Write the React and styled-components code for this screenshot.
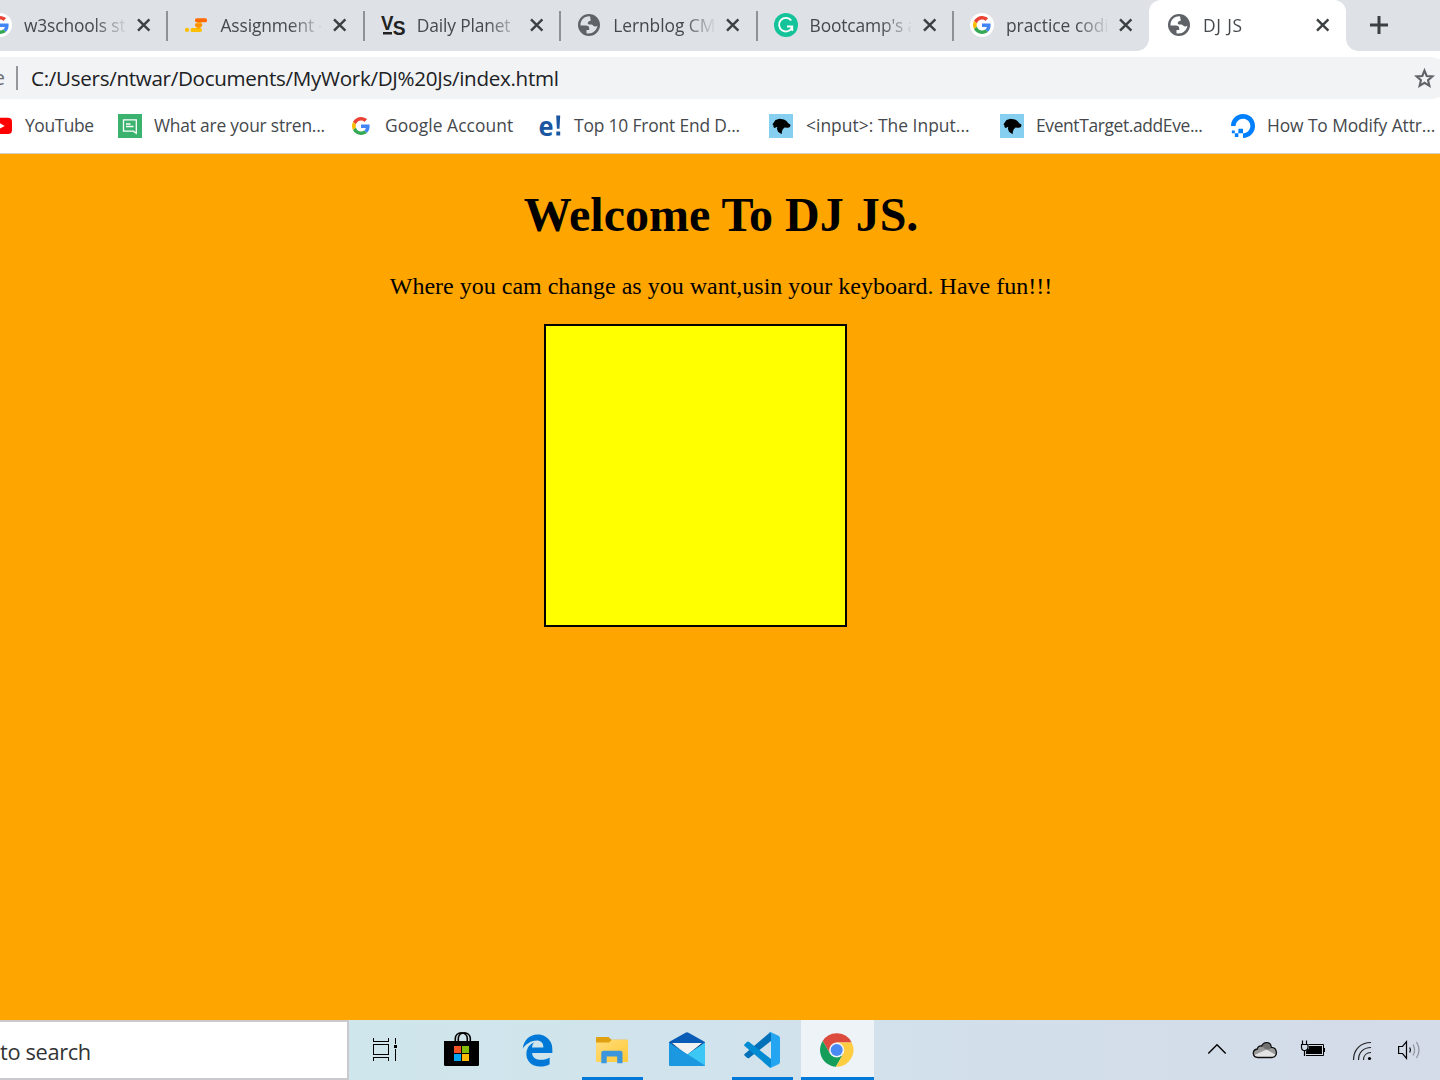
import React from 'react'
import styled, { createGlobalStyle } from 'styled-components'
import { SiDigitalocean } from 'react-icons/si'
import { FaEdgeLegacy } from 'react-icons/fa6'

const GlobalStyle = createGlobalStyle`
  * {
    box-sizing: border-box;
  }
  body {
    margin: 0;
    overflow: hidden;
    font-family: 'Open Sans', 'Noto Sans', sans-serif;
  }
  svg {
    display: block;
    flex: none;
  }
`
const Screen = styled.div`
  display: flex;
  flex-direction: column;
  width: 1440px;
  height: 1080px;
  overflow: hidden;
  background-color: #fff;
`
const TabStrip = styled.div`
  display: flex;
  flex: none;
  height: 51px;
  padding-right: 40px;
  margin-left: -29px;
  background-color: #dee1e6;
`
const Tab = styled.div`
  position: relative;
  display: flex;
  flex: none;
  align-items: center;
  width: 196.4px;
  height: 51px;
  padding: 0 0 2px ${(props) => (props.$active ? 17.6 : 17)}px;
  background-color: ${(props) => (props.$active ? '#fff' : 'transparent')};
  border-radius: 12px 12px 0 0;

  &::before,
  &::after {
    content: '';
    display: ${(props) => (props.$active ? 'block' : 'none')};
    position: absolute;
    bottom: 0;
    width: 12px;
    height: 12px;
  }
  &::before {
    left: -12px;
    background: radial-gradient(circle at 0 0, transparent 11.5px, #fff 12px);
  }
  &::after {
    right: -12px;
    background: radial-gradient(circle at 100% 0, transparent 11.5px, #fff 12px);
  }
`
const TabTitle = styled.div`
  width: 101px;
  margin: 0 12px;
  overflow: hidden;
  font-size: 17.4px;
  line-height: 24px;
  letter-spacing: ${(props) => props.$spacing || 0}px;
  white-space: nowrap;
  color: #45494d;
  mask-image: linear-gradient(to right, #000 70px, transparent 104px);
`
const TabDivider = styled.div`
  width: 2px;
  height: 30px;
  margin: 2px -1px 0 auto;
  background-color: #8f9398;
`
const NewTab = styled.div`
  display: flex;
  align-items: center;
  padding: 0 0 2px 21.5px;
`
const AddressRow = styled.div`
  display: flex;
  flex: none;
  height: 48px;
  padding-top: 6px;
`
const AddressBar = styled.div`
  display: flex;
  flex: none;
  align-items: center;
  width: 1451px;
  height: 42px;
  padding-right: 14px;
  background-color: #f1f3f4;
  border-radius: 0 21px 21px 0;
`
const Scheme = styled.div`
  display: flex;
  justify-content: flex-end;
  width: 18px;
  height: 24px;
  padding-right: 11px;
  font-size: 20px;
  line-height: 24px;
  color: #6b6f73;
  border-right: 2px solid #95989b;
`
const Url = styled.div`
  flex: 1;
  margin-left: 13px;
  font-size: 20.6px;
  line-height: 28px;
  letter-spacing: -0.3px;
  color: #202124;
`
const Bookmarks = styled.div`
  display: flex;
  flex: none;
  align-items: center;
  gap: 24px;
  height: 55px;
  margin-left: -11px;
  border-bottom: 1px solid #d5d0c4;
`
const Bookmark = styled.div`
  display: flex;
  flex: none;
  align-items: center;
  gap: 12px;
`
const BookmarkLabel = styled.div`
  width: ${(props) => props.$width}px;
  padding: 0 0 2px ${(props) => props.$indent || 0}px;
  font-size: 17.4px;
  line-height: 24px;
  letter-spacing: ${(props) => props.$spacing || 0}px;
  white-space: nowrap;
  color: #45494d;
`
const Page = styled.main`
  flex: 1;
  padding-top: 33px;
  font-family: 'Liberation Serif', serif;
  text-align: center;
  color: #000;
  background-color: orange;
`
const Title = styled.h1`
  margin: 0 0 31px 2px;
  font-size: 48px;
  line-height: 55px;
`
const Intro = styled.p`
  margin: 0 0 24px 2px;
  font-size: 24px;
  line-height: 27px;
`
const Pad = styled.div`
  width: 303px;
  height: 303px;
  margin-left: 544px;
  background-color: yellow;
  border: 2px solid #000;
`
const Taskbar = styled.footer`
  display: flex;
  flex: none;
  height: 60px;
  background: linear-gradient(to right, #cfe6ec 350px, #d1e3ec 700px, #d3dce9 1250px, #d4dbe9);
`
const SearchBox = styled.div`
  display: flex;
  align-items: center;
  width: 349px;
  padding-top: 2px;
  font-size: 21.8px;
  letter-spacing: -0.35px;
  color: #333;
  background-color: #fff;
  border: 2px solid #cbc9cd;
  border-left: none;
`
const Apps = styled.div`
  display: flex;
  gap: 2px;
`
const AppButton = styled.div`
  display: flex;
  flex-direction: column;
  align-items: center;
  justify-content: center;
  position: relative;
  width: ${(props) => props.$width || 73}px;
  padding-right: ${(props) => (props.$width ? 4 : 0)}px;
  background-color: ${(props) => (props.$active ? '#edf3f7' : 'transparent')};

  &::after {
    content: '';
    display: ${(props) => (props.$open || props.$active ? 'block' : 'none')};
    position: absolute;
    right: ${(props) => (props.$active ? 0 : 6)}px;
    bottom: 0;
    left: ${(props) => (props.$active ? 0 : 6)}px;
    height: 3px;
    background-color: #0078d7;
  }
`
const Tray = styled.div`
  display: flex;
  align-items: center;
  gap: 18px;
  margin-left: auto;
  padding-right: 16px;
`
const EdgeMark = styled(FaEdgeLegacy)`
  width: 33px;
  height: 33px;
  color: #0078d7;
`

function GoogleIcon({ disc }) {
  return (
    <svg width='24' height='24' viewBox='0 0 24 24'>
      {disc && <circle cx='12' cy='12' r='12' fill='#fff' />}
      <g transform='translate(3 3) scale(.375)'>
        <path fill='#EA4335' d='M24 9.5c3.54 0 6.71 1.22 9.21 3.6l6.85-6.85C35.9 2.38 30.47 0 24 0 14.62 0 6.51 5.38 2.56 13.22l7.98 6.19C12.43 13.72 17.74 9.5 24 9.5z' />
        <path fill='#4285F4' d='M46.98 24.55c0-1.57-.15-3.09-.38-4.55H24v9.02h12.94c-.58 2.96-2.26 5.48-4.78 7.18l7.73 6c4.51-4.18 7.09-10.36 7.09-17.65z' />
        <path fill='#FBBC05' d='M10.53 28.59c-.48-1.45-.76-2.99-.76-4.59s.27-3.14.76-4.59l-7.98-6.19C.92 16.46 0 20.12 0 24c0 3.88.92 7.54 2.56 10.78l7.97-6.19z' />
        <path fill='#34A853' d='M24 48c6.48 0 11.93-2.13 15.89-5.81l-7.73-6c-2.15 1.45-4.92 2.3-8.16 2.3-6.26 0-11.57-4.22-13.47-9.91l-7.98 6.19C6.51 42.62 14.62 48 24 48z' />
      </g>
    </svg>
  )
}

function AssignmentIcon() {
  return (
    <svg width='24' height='24' viewBox='0 0 24 24'>
      <rect x='11' y='5.3' width='12' height='4' rx='1.6' fill='#ff6a00' />
      <rect x='11' y='10.2' width='7.2' height='3.8' rx='1.4' fill='#ff9100' />
      <rect x='6.5' y='14.9' width='11.4' height='4' rx='1.6' fill='#ffbf00' />
      <path d='M13 9h4.500l-1 1.500h-3zM12.500 13.500h4v2h-4z' fill='#ffa000' />
      <circle cx='3' cy='16.9' r='2.1' fill='#ffbf00' />
    </svg>
  )
}

function VsIcon() {
  return (
    <svg width='24' height='24' viewBox='0 0 24 24' overflow='visible' fontFamily='Liberation Sans' fontWeight='700' fill='#222'>
      <text x='0' y='16.5' fontSize='20.5' textLength='12.5' lengthAdjust='spacingAndGlyphs'>V</text>
      <text x='11.8' y='21.5' fontSize='20' textLength='12.8' lengthAdjust='spacingAndGlyphs'>S</text>
      <rect x='2' y='19' width='9' height='2.5' />
    </svg>
  )
}

function GlobeIcon({ land }) {
  return (
    <svg width='24' height='24' viewBox='0 0 24 24'>
      <circle cx='12' cy='12' r='11' fill='#5f6368' />
      <path
        d='M13 3.400C7.200 3 3.300 7.400 3.500 12.500h5.300c2.200 0 3.400 1 3.400 2.700v1.700H9.500v3.300c5.200 1.300 10-2 10.900-7.400-1.600.9-3.300.9-4.300-.3-.9-1.100-2.100-.9-3.600-.9-1.900 0-2.200-1.900-1.200-2.900.9-.8 2.300-.4 2.500-1.700.1-.9-.9-1.400-.5-2.300.3-.6-.2-.9-.3-1.300z'
        fill={land}
      />
    </svg>
  )
}

function GrammarlyIcon() {
  return (
    <svg width='24' height='24' viewBox='0 0 24 24' fill='none' stroke='#fff' strokeWidth='1.8'>
      <circle cx='12' cy='12' r='12' fill='#15c39a' stroke='none' />
      <path d='M17.300 7.500A6.800 6.800 0 1 0 18 14.700M13 13.500h5.300v4.600' />
    </svg>
  )
}

function CloseIcon() {
  return (
    <svg width='14' height='14' viewBox='0 0 14 14' stroke='#3c4043' strokeWidth='2.4'>
      <path d='M1 1.300l11.400 11.400M12.400 1.300L1 12.700' />
    </svg>
  )
}

function StarIcon() {
  return (
    <svg width='25' height='25' viewBox='0 0 24 24' fill='none' stroke='#5f6368' strokeWidth='2'>
      <path d='M12 4.400l2.100 5.200 5.500.4-4.200 3.600 1.300 5.400-4.700-2.900-4.700 2.900 1.300-5.400L4.400 10l5.500-.4z' />
    </svg>
  )
}

function YoutubeIcon() {
  return (
    <svg width='24' height='24' viewBox='0 0 24 24'>
      <rect x='0' y='3.7' width='23' height='16.3' rx='4' fill='#f00' />
      <path d='M9.500 8.400l6.200 3.500-6.200 3.500z' fill='#fff' />
    </svg>
  )
}

function NoteIcon() {
  return (
    <svg width='24' height='24' viewBox='0 0 24 24' fill='none' stroke='#fff' strokeWidth='1.3'>
      <rect width='24' height='24' fill='#3bb36e' stroke='none' />
      <path d='M5.500 5.800h12.800v13.400l-3-2H5.500zM8 10h4.500M8 12.500h7.500' />
    </svg>
  )
}

function ExclaimIcon() {
  return (
    <svg width='24' height='24' viewBox='0 0 24 24' fontFamily='Open Sans' fontWeight='700' fill='#1b56a0'>
      <text x='0.5' y='21.8' fontSize='27' textLength='15' lengthAdjust='spacingAndGlyphs'>e</text>
      <path d='M18.200 1.500h4l-.7 13.300h-2.600z' />
      <rect x='18.3' y='17.5' width='3.9' height='4' />
    </svg>
  )
}

function DogIcon() {
  return (
    <svg width='24' height='24' viewBox='0 0 24 24'>
      <rect width='24' height='24' fill='#87cff0' />
      <path d='M3.500 10.500l1.400-2.200L6.500 6l4-1.200 4.500.7 2.500 1.500 1.500 2 2.500 1.700-.5 2.300-2 .8-3.500-.2-1.700 1.600-1 2.500.2 2-1.500-.2-2.500-1.800-1-2.700.2-2.200-2 1-1.500.200.6-1.500-1.500.2.800-1.200z' />
    </svg>
  )
}

function PlusIcon() {
  return (
    <svg width='24' height='24' viewBox='0 0 24 24' stroke='#3c4043' strokeWidth='3'>
      <path d='M12 3v18M3 12h18' />
    </svg>
  )
}

function TaskViewIcon() {
  return (
    <svg width='26' height='26' viewBox='0 0 26 26' fill='none' stroke='#000' shapeRendering='crispEdges'>
      <path d='M1.500 1v3.500h15V1M1.500 7.500h15v10h-15zM1.500 24v-3.500h15V24M23.500 1v6M23.500 12v12' />
      <rect x='22' y='8' width='3' height='3' fill='#000' stroke='none' />
    </svg>
  )
}

function StoreIcon() {
  return (
    <svg width='39' height='40' viewBox='0 0 39 40'>
      <path d='M12.300 12V8.500c0-7.500 12-7.500 12 0V12M15.300 12V8.500c0-7.500 12-7.500 12 0V12' fill='none' stroke='#000' strokeWidth='1.6' />
      <path d='M1 11h35v23.500q0 1.500-1.500 1.500h-32Q1 36 1 34.500z' />
      <rect x='11' y='16' width='7' height='7' fill='#f35325' />
      <rect x='19' y='16' width='7' height='7' fill='#81bc06' />
      <rect x='11' y='24' width='7' height='7' fill='#05a6f0' />
      <rect x='19' y='24' width='7' height='7' fill='#ffba08' />
    </svg>
  )
}

function FolderIcon() {
  return (
    <svg width='39' height='40' viewBox='0 0 39 40'>
      <defs>
        <linearGradient id='folder' x1='0' y1='0' x2='1' y2='1'>
          <stop offset='0' stopColor='#ffdc7c' />
          <stop offset='1' stopColor='#ffc937' />
        </linearGradient>
      </defs>
      <path d='M3 8q0-1 1-1h11.500l3 2.800H34q1 0 1 1V20H3z' fill='#e0a010' />
      <path d='M3 12.500h13l3-2.800h15q1 0 1 1V31q0 1-1 1H4q-1 0-1-1z' fill='url(#folder)' />
      <path d='M8.300 33.200V23q0-2.200 2.200-2.200h16.800q2.200 0 2.200 2.200v10.200h-5.300v-6.700H13.700v6.700z' fill='#3b96dc' />
    </svg>
  )
}

function MailIcon() {
  return (
    <svg width='39' height='40' viewBox='0 0 39 40'>
      <path d='M1 12L17.500 2.700q1.500-.9 3 0L37 12v3H1z' fill='#0a5bb5' />
      <path d='M4 13h30v10L19 27 4 21z' fill='#0c3c78' />
      <path d='M4 13h30L19 25z' fill='#f2f2f2' />
      <path d='M37 12.500V35q0 1-1 1H2z' fill='#3dc7f4' />
      <path d='M1 12.500L37 35.500q-.3.500-1 .5H2q-1 0-1-1z' fill='#1b98e0' />
    </svg>
  )
}

function CodeIcon() {
  return (
    <svg width='39' height='40' viewBox='0 0 39 40'>
      <path d='M1.600 25.600l2.300 2.200q1.100.9 2.200.1L28 11V2.500q-1.200 0-2 .8L1.600 24q-.9.800 0 1.600z' fill='#0070b8' />
      <path d='M1.600 14.300l2.300-2.200q1.100-.9 2.200-.1L28 29v8.700q-1.200 0-2-.8L1.600 16q-.9-.8 0-1.700z' fill='#008bd3' />
      <path d='M28 2.200l7.500 3.500q1.500.7 1.500 2.300v24q0 1.600-1.500 2.300L28 37.800q-1.300.4-2.300-.7 2.300.8 2.300-1.700V4.600q0-2.500-2.300-1.700 1-1.100 2.300-.7z' fill='#24a5f2' />
    </svg>
  )
}

function ChromeIcon() {
  return (
    <svg width='39' height='40' viewBox='0 0 39 40'>
      <g transform='translate(18.700 20)'>
        <path d='M0-7.600H14.900A16.700 16.700 0 0 0-14-9L-6.600 3.800z' fill='#dc4b3e' />
        <path d='M-14-9A16.700 16.700 0 0 0-.8 16.700L6.600 3.800-6.600 3.800z' fill='#149e5a' />
        <path d='M0-7.600H14.900A16.700 16.700 0 0 1-.8 16.700L6.600 3.800z' fill='#ffcd41' />
        <circle r='7.6' fill='#f3f3f3' />
        <circle r='6' fill='#4a8af4' />
      </g>
    </svg>
  )
}

function ChevronIcon() {
  return (
    <svg width='30' height='30' viewBox='0 0 30 30' fill='none' stroke='#000' strokeWidth='1.4'>
      <path d='M6.300 18.500L15 9.800l8.700 8.700' />
    </svg>
  )
}

function CloudIcon() {
  const outline =
    'M8 22.500c-6 0-6.300-7.600-.6-8.500.3-2.600 2.600-3.500 4.200-2.900C14 5.800 21 6.800 21.300 12.300c6.700.3 6.700 10.200.7 10.200z'
  return (
    <svg width='30' height='30' viewBox='0 0 30 30'>
      <path d={outline} fill='#9a9a9a' />
      <path d='M11.500 11q4-5 8.500-.5l1.200 3-4.700 1.500z' fill='#707070' />
      <path d='M4.500 20l12-5.500 9.500 5.500q-1.500 2.500-4 2.500H8q-2 0-3.500-2.500z' fill='#e3e3e3' />
      <path d={outline} fill='none' stroke='#111' strokeWidth='1.3' />
    </svg>
  )
}

function BatteryIcon() {
  return (
    <svg width='30' height='30' viewBox='0 0 30 30' fill='none' stroke='#000'>
      <path d='M11 9.500h14.500v11H8M26.500 13v4' />
      <path d='M11 11h13v8H8v-2.500l3-3z' fill='#000' stroke='none' />
      <path d='M4.500 5.500v4M8.500 5.500v4M3 9.500h7v3q0 2.500-2.500 3h-2Q3.500 15 3.500 12.500v-3M6.500 15.500V21' strokeWidth='1.2' />
    </svg>
  )
}

function WifiIcon() {
  return (
    <svg width='30' height='30' viewBox='0 0 30 30' fill='none' stroke='#222' strokeWidth='1.2'>
      <path d='M7.500 25C7.500 14.500 14.500 7.500 25 7.500M12.500 25c0-7.500 5-12.500 12.500-12.500M17.500 25c0-4.500 3-7.500 7.500-7.500' />
      <circle cx='23.5' cy='23.5' r='1.6' fill='#000' stroke='none' />
    </svg>
  )
}

function VolumeIcon() {
  return (
    <svg width='30' height='30' viewBox='0 0 30 30' fill='none' stroke='#000' strokeWidth='1.2'>
      <path d='M4.600 11.500h3.900l4-4.800v16.600l-4-4.800H4.600zM15.700 12.500q1.500 2.500 0 5' />
      <path d='M19 9.500q3.200 5.500 0 11M22.500 7q5 8 0 16' stroke='#8d939c' />
    </svg>
  )
}

const tabs = [
  { title: 'w3schools st', spacing: -0.15, icon: <GoogleIcon disc /> },
  { title: 'Assignment -', spacing: -0.1, icon: <AssignmentIcon /> },
  { title: 'Daily Planet |', spacing: -0.15, icon: <VsIcon /> },
  { title: 'Lernblog CM', spacing: -0.05, icon: <GlobeIcon land='#dee1e6' /> },
  { title: "Bootcamp's a", spacing: -0.15, icon: <GrammarlyIcon /> },
  { title: 'practice codi', icon: <GoogleIcon disc /> },
  { title: 'DJ JS', spacing: 0.8, icon: <GlobeIcon land='#fff' />, active: true },
]

const bookmarks = [
  { label: 'YouTube', width: 69, spacing: -0.4, icon: <YoutubeIcon /> },
  { label: 'What are your stren...', width: 171, spacing: -0.2, icon: <NoteIcon /> },
  { label: 'Google Account', width: 129, spacing: 0.06, icon: <GoogleIcon /> },
  { label: 'Top 10 Front End D...', width: 171, spacing: -0.16, icon: <ExclaimIcon /> },
  { label: '<input>: The Input...', width: 171, indent: 1, spacing: 0.04, icon: <DogIcon /> },
  { label: 'EventTarget.addEve...', width: 171, spacing: -0.36, icon: <DogIcon /> },
  { label: 'How To Modify Attr...', width: 173, spacing: -0.1, icon: <SiDigitalocean size={24} color='#0080ff' /> },
]

export default function App() {
  return (
    <Screen>
      <GlobalStyle />
      <TabStrip>
        {tabs.map((tab, i) => (
          <Tab key={tab.title} $active={tab.active}>
            {tab.icon}
            <TabTitle $spacing={tab.spacing}>{tab.title}</TabTitle>
            <CloseIcon />
            {i < tabs.length - 2 && <TabDivider />}
          </Tab>
        ))}
        <NewTab>
          <PlusIcon />
        </NewTab>
      </TabStrip>
      <AddressRow>
        <AddressBar>
          <Scheme>e</Scheme>
          <Url>C:/Users/ntwar/Documents/MyWork/DJ%20Js/index.html</Url>
          <StarIcon />
        </AddressBar>
      </AddressRow>
      <Bookmarks>
        {bookmarks.map((item) => (
          <Bookmark key={item.label}>
            {item.icon}
            <BookmarkLabel
              $width={item.width}
              $indent={item.indent}
              $spacing={item.spacing}
            >
              {item.label}
            </BookmarkLabel>
          </Bookmark>
        ))}
      </Bookmarks>
      <Page>
        <Title>Welcome To DJ JS.</Title>
        <Intro>
          Where you cam change as you want,usin your keyboard. Have fun!!!
        </Intro>
        <Pad />
      </Page>
      <Taskbar>
        <SearchBox>to search</SearchBox>
        <Apps>
          <AppButton $width={75}>
            <TaskViewIcon />
          </AppButton>
          <AppButton>
            <StoreIcon />
          </AppButton>
          <AppButton>
            <EdgeMark />
          </AppButton>
          <AppButton $open>
            <FolderIcon />
          </AppButton>
          <AppButton>
            <MailIcon />
          </AppButton>
          <AppButton $open>
            <CodeIcon />
          </AppButton>
          <AppButton $active>
            <ChromeIcon />
          </AppButton>
        </Apps>
        <Tray>
          <ChevronIcon />
          <CloudIcon />
          <BatteryIcon />
          <WifiIcon />
          <VolumeIcon />
        </Tray>
      </Taskbar>
    </Screen>
  )
}
